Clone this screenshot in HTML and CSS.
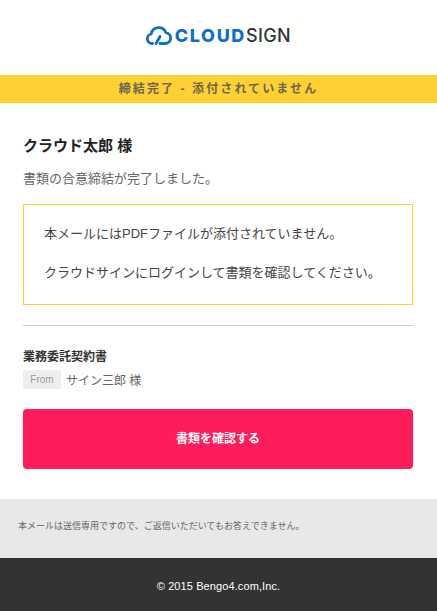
FILE: index.html
```html
<!DOCTYPE html>
<html lang="ja">
<head>
  <meta charset="UTF-8">
  <title>CloudSign</title>
  <meta name="viewport" content="width=device-width, initial-scale=1.0">
  <link rel="stylesheet" href="styles.css">
</head>
<body>
  <header class="logo">
    <svg class="logo-icon" width="26" height="20" viewBox="0 0 26 20" fill="none" stroke="#0f6fc6" stroke-width="2.8" stroke-linecap="round" stroke-linejoin="round">
      <path d="M6.5 18.5H6A4.8 4.8 0 0 1 5.2 9 7.6 7.6 0 0 1 19.8 7.6 5.5 5.5 0 0 1 20 18.5H14"/>
      <path d="M10 18.5L14 11.5"/>
    </svg>
    <span class="logo-cloud">CLOUD</span><span class="logo-sign">SIGN</span>
  </header>

  <div class="status">締結完了 - 添付されていません</div>

  <main class="content">
    <h1 class="name">クラウド太郎 様</h1>
    <p class="lead">書類の合意締結が完了しました。</p>

    <div class="notice">
      <p>本メールにはPDFファイルが添付されていません。</p>
      <p>クラウドサインにログインして書類を確認してください。</p>
    </div>

    <hr class="divider">

    <h2 class="doc-title">業務委託契約書</h2>
    <div class="from">
      <span class="from-label">From</span>
      <span class="from-name">サイン三郎 様</span>
    </div>

    <a class="button" href="#">書類を確認する</a>
  </main>

  <div class="note">本メールは送信専用ですので、ご返信いただいてもお答えできません。</div>
  <footer class="footer">© 2015 Bengo4.com,Inc.</footer>
</body>
</html>
```

FILE: styles.css
```css
* {
  margin: 0;
  padding: 0;
  box-sizing: border-box;
}

body {
  font-family: "Liberation Sans", "Noto Sans CJK JP", sans-serif;
  color: #333;
  background: #fff;
}

.logo {
  height: 75px;
  display: flex;
  align-items: center;
  justify-content: center;
  padding-bottom: 5px;
  font-family: "Inter", "Liberation Sans", sans-serif;
  font-size: 18px;
}

.logo-icon {
  margin-right: 3px;
}

.logo-cloud {
  color: #0f6fc6;
  font-weight: 800;
  letter-spacing: 1.6px;
}

.logo-sign {
  color: #2f3640;
  font-weight: 500;
  letter-spacing: 0.4px;
}

.status {
  height: 28px;
  line-height: 28px;
  background: #ffd033;
  color: #6b6650;
  font-size: 12px;
  font-weight: 700;
  letter-spacing: 2.1px;
  text-align: center;
}

.content {
  padding: 32px 24px 30px 23px;
}

.name {
  font-size: 15px;
  line-height: 22px;
  font-weight: 700;
  color: #222;
}

.lead {
  margin-top: 11px;
  font-size: 13px;
  line-height: 22px;
  color: #666;
}

.notice {
  margin-top: 14px;
  height: 101px;
  padding: 17px 20px;
  border: 1px solid #ffd033;
  font-size: 13px;
  line-height: 24px;
  color: #444;
}

.notice p + p {
  margin-top: 15px;
}

.divider {
  margin-top: 20px;
  border: 0;
  border-top: 1px solid #ccc;
}

.doc-title {
  margin-top: 21px;
  font-size: 12px;
  line-height: 20px;
  font-weight: 700;
  color: #333;
}

.from {
  margin-top: 3px;
  display: flex;
  align-items: center;
  gap: 5px;
}

.from-label {
  width: 38px;
  height: 19px;
  line-height: 19px;
  background: #eee;
  color: #999;
  font-size: 10px;
  text-align: center;
}

.from-name {
  font-size: 12px;
  color: #666;
}

.button {
  display: block;
  margin-top: 20px;
  height: 60px;
  line-height: 60px;
  border-radius: 4px;
  background: #ff1c5a;
  color: #fff;
  font-size: 12px;
  font-weight: 700;
  text-align: center;
  text-decoration: none;
}

.note {
  height: 59px;
  line-height: 54px;
  padding-left: 18px;
  background: #e8e8e8;
  color: #666;
  font-size: 9px;
}

.footer {
  height: 53px;
  line-height: 56px;
  background: #333;
  color: #fff;
  font-size: 11px;
  letter-spacing: 0.1px;
  text-align: center;
}
```
